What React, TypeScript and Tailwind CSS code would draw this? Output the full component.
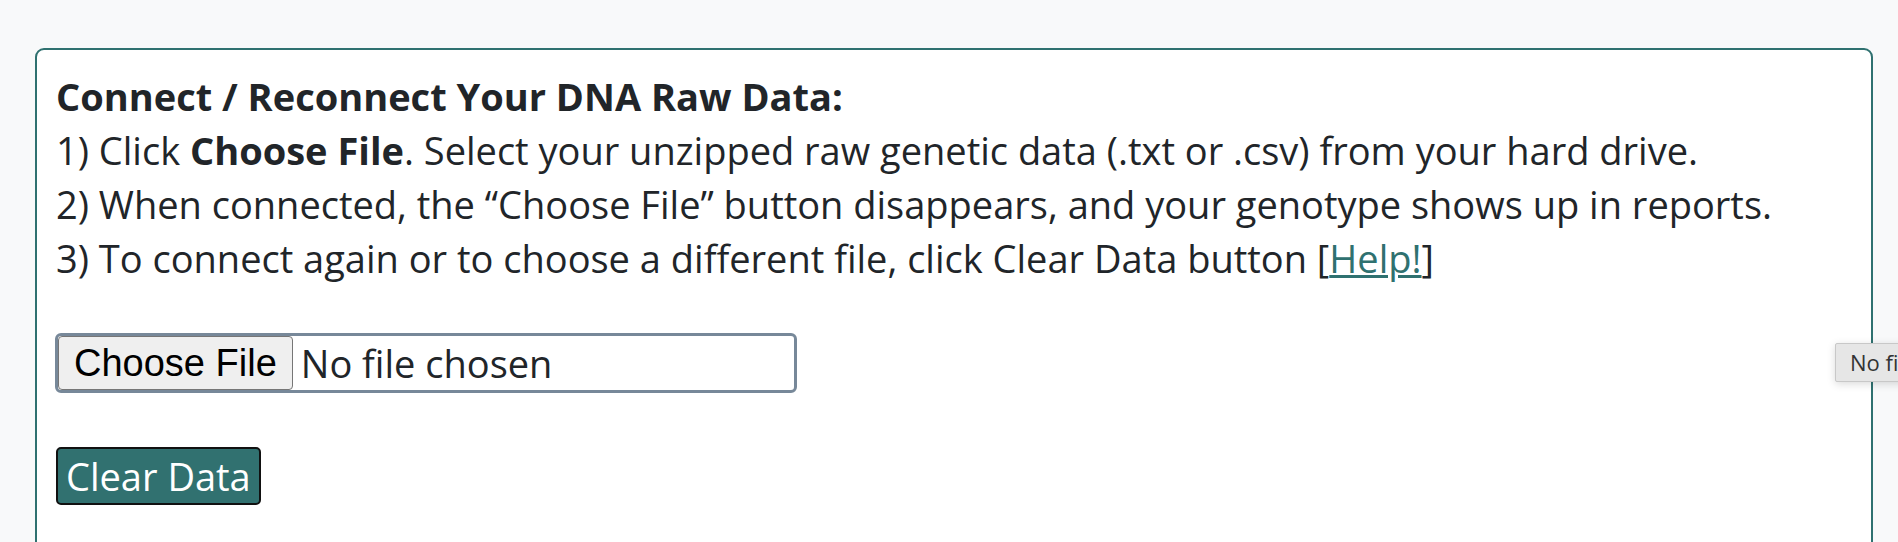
import React from 'react';

const App: React.FC = () => {
  return (
    <div className="relative w-[1898px] h-[542px] overflow-hidden bg-[#f8f9fa] pt-[48px] font-['Open_Sans',sans-serif] text-[#212529]">
      {/* Card */}
      <div className="ml-[35px] mr-[25px] h-[600px] rounded-[9px] border-2 border-[#2f7170] bg-white pt-[19px] pl-[19px]">
        <div className="text-[38px] leading-[54px]">
          <div className="font-bold">Connect / Reconnect Your DNA Raw Data:</div>
          <div>
            1) Click <b>Choose File</b>. Select your unzipped raw genetic data (.txt or .csv) from your hard drive.
          </div>
          <div>2) When connected, the “Choose File” button disappears, and your genotype shows up in reports.</div>
          <div>
            3) To connect again or to choose a different file, click Clear Data button [
            <a href="#" className="text-[#2f7170] underline">
              Help!
            </a>
            ]
          </div>
        </div>

        {/* File input */}
        <label className="mt-[48px] -ml-[1px] flex h-[60px] w-[742px] cursor-pointer items-center rounded-[6px] border-[3px] border-[#778899]">
          <input type="file" className="hidden" />
          <span className="flex h-[54px] items-center rounded-[4px] border border-[#767676] bg-[#efefef] px-[15px] font-['Liberation_Sans',Arial,sans-serif] text-[38px] text-black">
            Choose File
          </span>
          <span className="ml-[8px] text-[38px]">No file chosen</span>
        </label>

        {/* Clear button */}
        <button className="mt-[54px] flex h-[58px] items-center rounded-[5px] border-2 border-[#111] bg-[#317170] px-[8px] text-[38px] text-white">
          Clear Data
        </button>
      </div>

      {/* Native tooltip */}
      <div className="absolute left-[1835px] top-[343px] h-[39px] whitespace-nowrap rounded-[2px] border border-[#c8c8c8] bg-[#e6e6e6] pl-[14px] pr-[10px] text-[22px] leading-[37px] text-[#333] shadow-[0_2px_8px_rgba(0,0,0,0.15)]">
        No file chosen
      </div>
    </div>
  );
};

export default App;
